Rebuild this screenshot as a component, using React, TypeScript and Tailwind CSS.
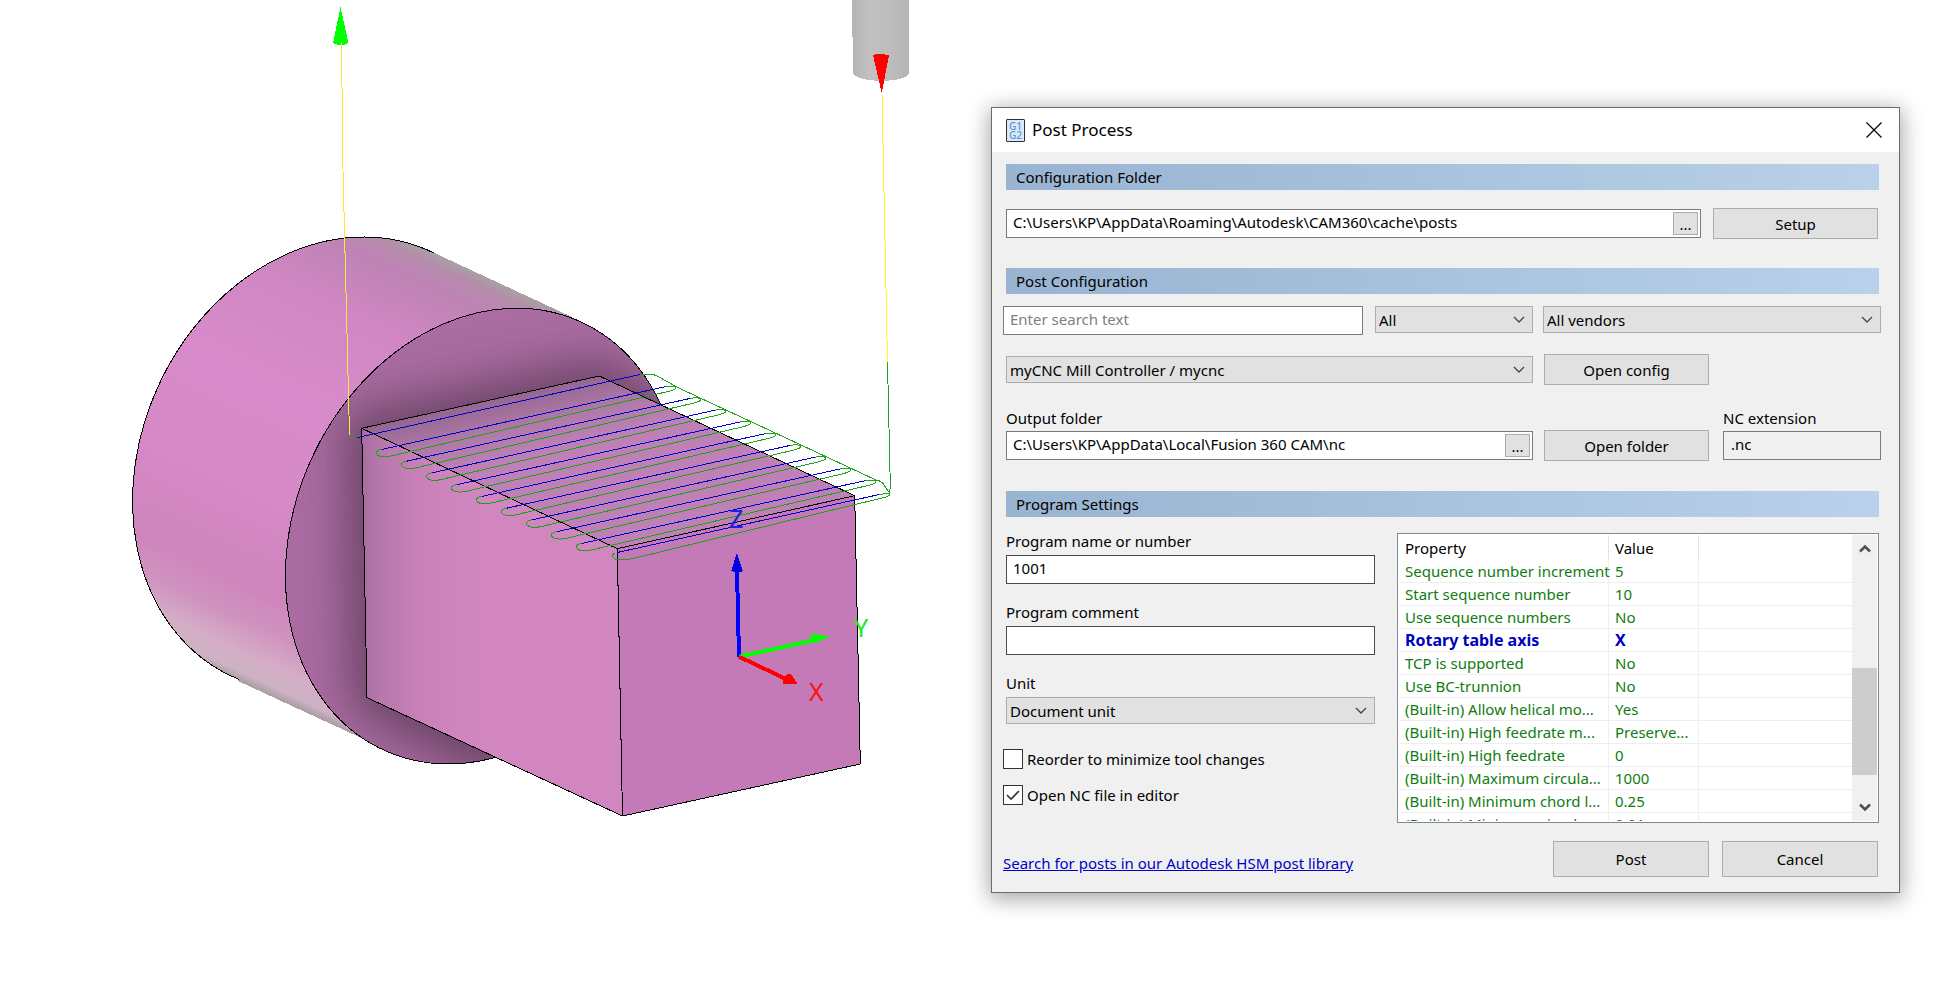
import { useState } from 'react';
import type { ReactNode } from 'react';

interface PropertyRow {
  name: string;
  value: string;
  modified?: boolean;
}

const PROPERTIES: PropertyRow[] = [
  { name: 'Sequence number increment', value: '5' },
  { name: 'Start sequence number', value: '10' },
  { name: 'Use sequence numbers', value: 'No' },
  { name: 'Rotary table axis', value: 'X', modified: true },
  { name: 'TCP is supported', value: 'No' },
  { name: 'Use BC-trunnion', value: 'No' },
  { name: '(Built-in) Allow helical mo...', value: 'Yes' },
  { name: '(Built-in) High feedrate m...', value: 'Preserve...' },
  { name: '(Built-in) High feedrate', value: '0' },
  { name: '(Built-in) Maximum circula...', value: '1000' },
  { name: '(Built-in) Minimum chord l...', value: '0.25' },
  { name: '(Built-in) Minimum circula...', value: '0.01' },
];

const INPUT = 'block h-[29px] w-full border bg-white pl-[6px] pb-[3px] text-black outline-none';
const BUTTON = 'shrink-0 border border-[#adadad] bg-[#e1e1e1] text-black hover:bg-[#e5f1fb]';

function SectionHeader({ children }: { children: ReactNode }) {
  return (
    <h2 className="ml-[3px] mr-[2px] h-[26px] bg-linear-to-r from-[#99b4d1] to-[#b9d1ea] pl-[10px] leading-[26px]">
      {children}
    </h2>
  );
}

function Select({ id, label, value }: { id: string; label?: string; value: string }) {
  return (
    <div className="relative">
      <select
        id={id}
        aria-label={label}
        className="block h-[27px] w-full appearance-none border border-[#adadad] bg-[#e1e1e1] pl-[3px] text-black outline-none"
      >
        <option>{value}</option>
      </select>
      <svg
        className="pointer-events-none absolute right-[8px] top-[10px]"
        width="12"
        height="8"
        viewBox="0 0 12 8"
        fill="none"
        stroke="#444"
        strokeWidth="1.3"
      >
        <path d="M1 1 L6 6 L11 1" />
      </svg>
    </div>
  );
}

function PathField({ id, label, value }: { id: string; label?: string; value: string }) {
  return (
    <div className="flex h-[29px] w-full items-center border border-[#7a7a7a] bg-white pr-[2px]">
      <input
        id={id}
        aria-label={label}
        defaultValue={value}
        className="min-w-0 flex-1 pb-[3px] pl-[6px] text-black outline-none"
      />
      <button
        type="button"
        aria-label="Browse"
        className="h-[23px] w-[25px] border border-[#adadad] bg-[#e1e1e1] leading-[20px]"
      >
        ...
      </button>
    </div>
  );
}

function Checkbox({ label, initial }: { label: string; initial: boolean }) {
  const [checked, setChecked] = useState(initial);

  return (
    <label className="flex h-[20px] items-center gap-1">
      <span className="relative flex">
        <input
          type="checkbox"
          checked={checked}
          onChange={(e) => setChecked(e.target.checked)}
          className="size-[20px] appearance-none border border-[#333] bg-white"
        />
        {checked && (
          <svg
            className="pointer-events-none absolute left-0 top-0"
            width="20"
            height="20"
            viewBox="0 0 20 20"
            fill="none"
            stroke="#333"
            strokeWidth="1.6"
          >
            <path d="M4 10 L8 14 L16 6" />
          </svg>
        )}
      </span>
      {label}
    </label>
  );
}

function PropertyTable() {
  return (
    <div className="mt-4 flex h-[290px] overflow-hidden border border-[#828790] bg-white p-px">
      <div className="min-w-0 flex-1 overflow-hidden">
        <table className="w-full table-fixed border-separate border-spacing-0 whitespace-nowrap text-left">
          <colgroup>
            <col className="w-[210px]" />
            <col className="w-[90px]" />
            <col />
          </colgroup>
          <thead>
            <tr className="h-[25px]">
              <th className="border-r border-[#e5e5e5] p-0 pl-[6px] font-normal leading-[24px]">Property</th>
              <th className="border-r border-[#e5e5e5] p-0 pl-[6px] font-normal leading-[24px]">Value</th>
              <th className="p-0" />
            </tr>
          </thead>
          <tbody>
            {PROPERTIES.map((row) => (
              <tr
                key={row.name}
                className={row.modified ? 'h-[23px] text-base font-bold text-[#0000c0]' : 'h-[23px] text-[#107c10]'}
              >
                <td className="border-b border-r border-[#eeeeee] p-0 pl-[6px] leading-[22px]">{row.name}</td>
                <td className="border-b border-r border-[#eeeeee] p-0 pl-[6px] leading-[22px]">{row.value}</td>
                <td className="border-b border-[#eeeeee] p-0" />
              </tr>
            ))}
          </tbody>
        </table>
      </div>
      <div className="flex w-[25px] flex-col items-center bg-[#f0f0f0]">
        <button type="button" aria-label="Scroll up" className="flex h-[27px] w-full items-center justify-center">
          <svg width="12" height="9" viewBox="0 0 12 9" fill="none" stroke="#505050" strokeWidth="2.6">
            <path d="M1 7.5 L6 2.5 L11 7.5" />
          </svg>
        </button>
        <div className="flex w-full flex-1 flex-col">
          <div className="h-[106px] w-full shrink-0" />
          <div className="h-[107px] w-full bg-[#cdcdcd]" />
        </div>
        <button type="button" aria-label="Scroll down" className="flex h-[27px] w-full items-center justify-center">
          <svg width="12" height="9" viewBox="0 0 12 9" fill="none" stroke="#505050" strokeWidth="2.6">
            <path d="M1 1.5 L6 6.5 L11 1.5" />
          </svg>
        </button>
      </div>
    </div>
  );
}

function PostProcessDialog() {
  return (
    <section
      role="dialog"
      aria-labelledby="dialog-title"
      className="mt-[107px] border border-[#6b6b6b] bg-[#f0f0f0] text-[15px] leading-6 shadow-[0_4px_20px_2px_rgba(0,0,0,0.35)]"
    >
      <header className="flex h-[44px] items-center bg-white pl-[14px] pr-[17px]">
        <svg width="19" height="23" viewBox="0 0 19 23" fontFamily="Noto Sans, sans-serif" fontSize="10" fontWeight="500">
          <rect x="0.5" y="0.5" width="18" height="22" rx="0.5" fill="#dfe9f5" stroke="#2d3138" />
          <text x="3" y="11" fill="#4a98de">G1</text>
          <text x="3" y="20" fill="#4a98de">G2</text>
        </svg>
        <h1 id="dialog-title" className="ml-[7px] flex-1 text-[17px]">
          Post Process
        </h1>
        <button type="button" aria-label="Close">
          <svg width="16" height="16" viewBox="0 0 16 16" stroke="#000" strokeWidth="1.2">
            <path d="M0.5 0.5 L15.5 15.5 M15.5 0.5 L0.5 15.5" />
          </svg>
        </button>
      </header>

      <form className="pb-[15px] pl-[11px] pr-[18px] pt-3" onSubmit={(e) => e.preventDefault()}>
        <SectionHeader>Configuration Folder</SectionHeader>
        <div className="mx-[3px] mt-[18px] flex h-[31px] items-center gap-3">
          <PathField id="config-folder" label="Configuration folder" value="C:\Users\KP\AppData\Roaming\Autodesk\CAM360\cache\posts" />
          <button type="button" className={`${BUTTON} h-[31px] w-[165px]`}>
            Setup
          </button>
        </div>

        <div className="mt-[29px]">
          <SectionHeader>Post Configuration</SectionHeader>
        </div>
        <div className="mt-3 flex">
          <input
            aria-label="Search"
            placeholder="Enter search text"
            className={`${INPUT} mr-3 min-w-0 flex-1 border-[#7a7a7a] placeholder:text-[#808080]`}
          />
          <div className="mr-[10px] w-[158px]">
            <Select id="capability" label="Capability" value="All" />
          </div>
          <div className="w-[338px]">
            <Select id="vendor" label="Vendor" value="All vendors" />
          </div>
        </div>
        <div className="ml-[3px] mt-[19px] flex items-center gap-[11px] pr-[172px]">
          <div className="flex-1">
            <Select id="post" label="Post processor" value="myCNC Mill Controller / mycnc" />
          </div>
          <button type="button" className={`${BUTTON} h-[31px] w-[165px]`}>
            Open config
          </button>
        </div>
        <div className="ml-[3px] mt-[21px] flex items-end">
          <div className="mr-[11px] flex-1">
            <label htmlFor="output-folder" className="block">
              Output folder
            </label>
            <div className="flex h-[31px] items-center">
              <PathField id="output-folder" value="C:\Users\KP\AppData\Local\Fusion 360 CAM\nc" />
            </div>
          </div>
          <button type="button" className={`${BUTTON} mr-[14px] h-[31px] w-[165px]`}>
            Open folder
          </button>
          <div className="w-[158px]">
            <label htmlFor="nc-extension" className="block">
              NC extension
            </label>
            <div className="flex h-[31px] items-center">
              <input
                id="nc-extension"
                defaultValue=".nc"
                className="h-[29px] w-full border border-[#7a7a7a] bg-[#f0f0f0] pb-[3px] pl-[7px] outline-none"
              />
            </div>
          </div>
        </div>

        <div className="mt-[30px]">
          <SectionHeader>Program Settings</SectionHeader>
        </div>
        <div className="mr-[2px] grid grid-cols-[372fr_482fr] gap-[22px]">
          <div className="pt-3">
            <div className="ml-[3px] flex flex-col gap-4">
              <div>
                <label htmlFor="program-name" className="mb-[2px] block">
                  Program name or number
                </label>
                <input id="program-name" defaultValue="1001" className={`${INPUT} border-[#4a4a4a]`} />
              </div>
              <div>
                <label htmlFor="program-comment" className="mb-[2px] block">
                  Program comment
                </label>
                <input id="program-comment" className={`${INPUT} border-[#4a4a4a]`} />
              </div>
              <div>
                <label htmlFor="unit" className="mb-[2px] block">
                  Unit
                </label>
                <Select id="unit" value="Document unit" />
              </div>
            </div>
            <div className="mt-[25px] flex flex-col gap-4">
              <Checkbox label="Reorder to minimize tool changes" initial={false} />
              <Checkbox label="Open NC file in editor" initial={true} />
            </div>
          </div>
          <PropertyTable />
        </div>

        <footer className="mt-[18px] flex h-[36px] items-center">
          <a href="#library" className="flex-1 pt-2 text-[#0000c8] underline">
            Search for posts in our Autodesk HSM post library
          </a>
          <button type="submit" className={`${BUTTON} mr-[13px] h-[36px] w-[156px]`}>
            Post
          </button>
          <button type="button" className={`${BUTTON} mr-[3px] h-[36px] w-[156px]`}>
            Cancel
          </button>
        </footer>
      </form>
    </section>
  );
}

// Raster passes repeat at a constant screen step
const PASS_STEP = { x: 25, y: 11.75 };
const PASSES = [0, 1, 2, 3, 4, 5, 6, 7, 8];

function Toolpath() {
  return (
    <g fill="none" strokeWidth="1">
      <path d="M341.5 44 L343 170 L349.5 435" stroke="#f6ea3c" />
      <path d="M882 94 L887.5 362" stroke="#fafa28" />
      <g stroke="#1fa01f">
        <path d="M349.5 435 q1 4 7 2.7" />
        <path d="M887.5 362 L890.3 485 L889.5 495 Q888 497 884 497.5 L633 558.5 Q624 560.5 616 559.5 Q609 556 615 553" />
        <path d="M640 374.5 L653 374.5 Q657 375.5 676 386.7 L876 480 Q882 481 884 485 L889.5 493 L879.3 494.5" />
      </g>
      <path d="M356.7 437.7 L640 374.5" stroke="#0000c8" />
      {PASSES.map((i) => (
        <g key={i} transform={`translate(${i * PASS_STEP.x} ${i * PASS_STEP.y})`}>
          <path
            d="M382.3 449.3 Q375 450.5 376.7 454 Q379 457.5 388 456.6 Q393 456 398.3 454.3 L668 391.5 Q678 389 675.5 386.8 Q672 385.5 665 386.7"
            stroke="#1fa01f"
          />
          <path d="M382.3 449.3 L665 386.7" stroke="#0000c8" />
        </g>
      ))}
      <path d="M617.3 552.5 L879.3 494.5" stroke="#0000c8" />
    </g>
  );
}

function Viewport() {
  return (
    <svg
      className="h-auto w-full"
      viewBox="0 0 991 984"
      shapeRendering="crispEdges"
      role="img"
      aria-label="Stock and toolpath preview"
    >
      <defs>
        <linearGradient id="cylinder" gradientUnits="userSpaceOnUse" x1="434" y1="253.6" x2="235" y2="679.6">
          <stop offset="0" stopColor="#a8a0a4" />
          <stop offset="0.02" stopColor="#b58dab" />
          <stop offset="0.07" stopColor="#bf83b5" />
          <stop offset="0.2" stopColor="#d187c4" />
          <stop offset="0.4" stopColor="#d88bca" />
          <stop offset="0.62" stopColor="#d589c7" />
          <stop offset="0.8" stopColor="#ce84bc" />
          <stop offset="0.88" stopColor="#d093c0" />
          <stop offset="0.94" stopColor="#d4adc6" />
          <stop offset="0.98" stopColor="#cdb2c3" />
          <stop offset="1" stopColor="#a99ba4" />
        </linearGradient>
        <linearGradient id="side" gradientUnits="userSpaceOnUse" x1="364" y1="0" x2="480" y2="0">
          <stop offset="0" stopColor="#a86f9f" />
          <stop offset="0.15" stopColor="#b878ac" />
          <stop offset="0.5" stopColor="#ca81b9" />
          <stop offset="1" stopColor="#d186c0" />
        </linearGradient>
        <linearGradient id="top" gradientUnits="userSpaceOnUse" x1="480" y1="402" x2="494" y2="464">
          <stop offset="0" stopColor="#94668f" />
          <stop offset="0.5" stopColor="#b079a8" />
          <stop offset="1" stopColor="#be80b5" />
        </linearGradient>
        <linearGradient id="tool" x1="0" y1="0" x2="1" y2="0">
          <stop offset="0" stopColor="#b4b4b4" />
          <stop offset="0.3" stopColor="#c2c0c0" />
          <stop offset="0.7" stopColor="#bcbcbc" />
          <stop offset="1" stopColor="#b4b4b4" />
        </linearGradient>
        <clipPath id="face">
          <path d="M516.6 308.2 A235.7 187.7 -65 0 0 448.4 764 A235.7 187.7 -65 0 0 516.6 308.2 Z" />
        </clipPath>
        <filter id="occlusion" x="-50%" y="-50%" width="200%" height="200%">
          <feGaussianBlur stdDeviation="24" />
        </filter>
      </defs>

      {/* Spindle */}
      <path d="M852 0 L853 73 Q856 80 882 81 Q908 80 909.5 72 L908.5 0 Z" fill="url(#tool)" />

      {/* Round stock */}
      <path
        d="M364 237 A234.6 190 -64.5 0 0 299 691 A234.6 190 -64.5 0 0 364 237 Z"
        fill="url(#cylinder)"
        stroke="#000"
      />
      <path d="M434 252.8 L572 317 L482 536 L372 743 L238 681 Z" fill="url(#cylinder)" />
      <g clipPath="url(#face)">
        <rect x="280" y="300" width="410" height="470" fill="#aa6ca2" />
        <path
          d="M362 428 L599 376 L660 420 L560 770 L470 752 L367 698 Z"
          fill="#6c4566"
          stroke="#6c4566"
          strokeWidth="36"
          filter="url(#occlusion)"
        />
      </g>
      <path
        d="M516.6 308.2 A235.7 187.7 -65 0 0 448.4 764 A235.7 187.7 -65 0 0 516.6 308.2 Z"
        fill="none"
        stroke="#000"
      />

      {/* Square block */}
      <g stroke="#000" strokeLinejoin="round">
        <path d="M361.7 428.3 L599.3 376 L854.7 495.7 L617.3 548.7 Z" fill="url(#top)" />
        <path d="M361.7 428.3 L617.3 548.7 L622.5 816 L367 697.7 Z" fill="url(#side)" />
        <path d="M617.3 548.7 L854.7 495.7 L860.3 764 L622.5 816 Z" fill="#c47ab7" />
      </g>

      <Toolpath />

      {/* Start and end markers */}
      <path d="M340.5 7 L348.5 43 Q341 47 333 43 Z" fill="#00ff00" />
      <path d="M341.5 42 V48" stroke="#e8e840" />
      <path d="M873 55 Q881 52.5 889 55.5 L881.7 93 Z" fill="#ff0000" />

      {/* Axis triad */}
      <g strokeWidth="4">
        <path d="M739 656.7 L737 570" stroke="#0000ff" />
        <path d="M739 656.7 L815 640" stroke="#00ff00" />
        <path d="M739 656.7 L787 679.5" stroke="#ff0000" />
      </g>
      <path d="M736.7 553 L743 571 Q737 574 731.3 571 Z" fill="#0000e0" />
      <path d="M830 636.7 L811.5 633.5 Q810 640 814 643.5 Z" fill="#00ff00" />
      <path d="M798 684.5 L791 674 Q787 673 784.5 677 Q782 681 783.5 683.5 Z" fill="#ff0000" />
      <g fontFamily="Noto Sans, sans-serif" fontSize="25">
        <text x="729" y="528" fill="#2020e8">Z</text>
        <text x="854" y="637" fill="#20e820">Y</text>
        <text x="809" y="701" fill="#ff1010">X</text>
      </g>
    </svg>
  );
}

export default function App() {
  return (
    <main className="mr-[42px] grid min-h-screen grid-cols-[991fr_909fr] items-start bg-white font-['Noto_Sans',sans-serif] text-black">
      <Viewport />
      <PostProcessDialog />
    </main>
  );
}
